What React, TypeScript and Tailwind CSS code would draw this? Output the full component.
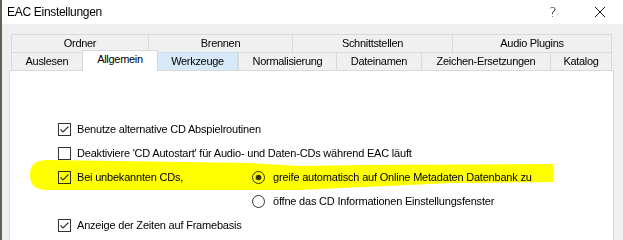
import React from "react";

const row1: [string, number][] = [
  ["Ordner", 137],
  ["Brennen", 144],
  ["Schnittstellen", 160],
  ["Audio Plugins", 160],
];

const row2: [string, number][] = [
  ["Auslesen", 71],
  ["Allgemein", 76],
  ["Werkzeuge", 80],
  ["Normalisierung", 98],
  ["Dateinamen", 85],
  ["Zeichen-Ersetzungen", 129],
  ["Katalog", 62],
];

function CheckBox({ checked }: { checked?: boolean }) {
  return (
    <svg width="13" height="13" viewBox="0 0 13 13" className="shrink-0">
      <rect x="0.5" y="0.5" width="12" height="12" fill="none" stroke="#333333" />
      {checked && (
        <path d="M2.5 6.5 L5 9 L10.5 3.5" fill="none" stroke="#333333" strokeWidth="1.1" />
      )}
    </svg>
  );
}

function Radio({ checked }: { checked?: boolean }) {
  return (
    <svg width="13" height="13" viewBox="0 0 13 13" className="shrink-0">
      <circle cx="6.5" cy="6.5" r="6" fill="none" stroke="#333333" />
      {checked && <circle cx="6.5" cy="6.5" r="2.8" fill="#333333" />}
    </svg>
  );
}

export default function App() {
  return (
    <div className="relative flex w-[623px] h-[240px] overflow-hidden bg-[#f0f0f0] font-['Liberation_Sans',Arial,sans-serif] text-black">
      {/* desktop behind the window */}
      <div className="w-[2px] shrink-0 bg-[#5a6455]" />

      <div className="flex-1 flex flex-col">
        {/* title bar */}
        <div className="h-[24px] bg-white flex items-center shrink-0">
          <span className="pl-[5px] text-[12px] tracking-[-0.3px]">EAC Einstellungen</span>
          <div className="ml-auto flex h-full">
            <div className="w-[48px] flex items-center justify-center text-[14px] font-['DejaVu_Sans',sans-serif] font-light">?</div>
            <div className="w-[46px] flex items-center justify-center">
              <svg width="10" height="10" viewBox="0 0 10 10">
                <path d="M0 0 L10 10 M10 0 L0 10" stroke="#111" strokeWidth="1" />
              </svg>
            </div>
          </div>
        </div>

        {/* tab rows */}
        <div className="mt-[10px] ml-[9px] w-[601px] text-[11px] tracking-[-0.3px]">
          <div className="flex h-[18px]">
            {row1.map(([t, w], i) => (
              <div
                key={t}
                style={{ width: w }}
                className={`flex items-center justify-center border-t border-l border-[#d9d9d9] ${i === row1.length - 1 ? "border-r" : ""}`}
              >
                {t}
              </div>
            ))}
          </div>
          <div className="flex h-[18px] items-stretch">
            {row2.map(([t, w], i) => {
              if (t === "Allgemein")
                return (
                  <div
                    key={t}
                    style={{ width: w }}
                    className="relative z-10 self-start -mt-[2px] h-[21px] pb-[3px] flex items-center justify-center bg-white border-t border-l border-r border-[#d9d9d9]"
                  >
                    {t}
                  </div>
                );
              if (t === "Werkzeuge")
                return (
                  <div
                    key={t}
                    style={{ width: w }}
                    className="flex items-center justify-center bg-[#d8eaf9] border-t border-r border-[#c3ddf4]"
                  >
                    {t}
                  </div>
                );
              return (
                <div
                  key={t}
                  style={{ width: w }}
                  className={`flex items-center justify-center border-t border-l border-[#d9d9d9] ${i === row2.length - 1 ? "border-r" : ""}`}
                >
                  {t}
                </div>
              );
            })}
          </div>
        </div>

        {/* panel */}
        <div className="ml-[7px] w-[605px] flex-1 bg-white border border-b-0 border-[#d9d9d9] pt-[46px] pl-[48px] text-[11px] tracking-[-0.2px]">
          <div className="flex items-center gap-[6px] h-[24px]">
            <CheckBox checked />
            <span>Benutze alternative CD Abspielroutinen</span>
          </div>
          <div className="flex items-center gap-[6px] h-[24px]">
            <CheckBox />
            <span>Deaktiviere 'CD Autostart' für Audio- und Daten-CDs während EAC läuft</span>
          </div>
          <div className="flex items-center h-[24px]">
            <div className="w-[194px] flex items-center gap-[6px]">
              <CheckBox checked />
              <span>Bei unbekannten CDs,</span>
            </div>
            <div className="flex items-center gap-[8px]">
              <Radio checked />
              <span>greife automatisch auf Online Metadaten Datenbank zu</span>
            </div>
          </div>
          <div className="flex items-center h-[24px]">
            <div className="w-[194px]" />
            <div className="flex items-center gap-[8px]">
              <Radio />
              <span>öffne das CD Informationen Einstellungsfenster</span>
            </div>
          </div>
          <div className="flex items-center gap-[6px] h-[24px]">
            <CheckBox checked />
            <span>Anzeige der Zeiten auf Framebasis</span>
          </div>
        </div>
      </div>

      {/* highlighter mark */}
      <svg
        className="absolute left-0 top-0 pointer-events-none mix-blend-multiply"
        width="623"
        height="240"
        viewBox="0 0 623 240"
      >
        <path
          d="M30 175 C30 165 35 160 48 160 L250 163 L300 166 L360 165 L553 164 L553 182 L450 183 L410 185 L340 188 L300 190 L48 190 C36 190 30 186 30 175 Z"
          fill="#ffff00"
        />
      </svg>
    </div>
  );
}
